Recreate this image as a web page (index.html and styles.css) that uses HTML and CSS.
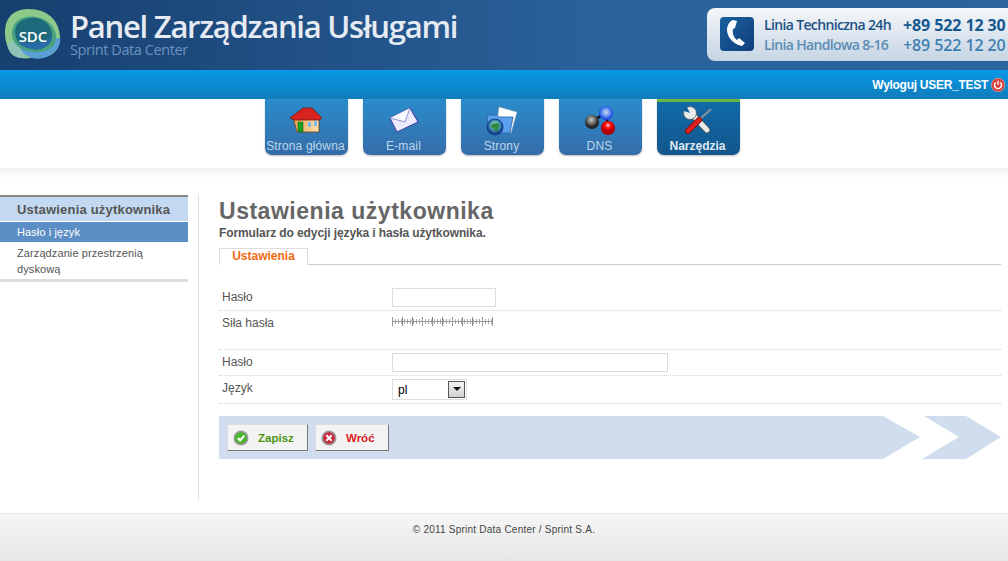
FILE: index.html
```html
<!DOCTYPE html>
<html lang="pl">
<head>
<meta charset="utf-8">
<title>Panel Zarządzania Usługami</title>
<link rel="stylesheet" href="styles.css">
</head>
<body>
<header class="top">
  <div class="brand">
    <svg class="logo" width="62" height="62" viewBox="0 0 62 62">
      <path d="M6 22C10 8 24 5 38 8c14 3 21 14 22 26 1 13-8 23-20 20C26 58 12 58 8 46 5 38 4 30 6 22z" fill="#8cc98a"/>
      <path d="M8 42c4-6 12-4 18 2 4 5 2 12-4 12C14 56 8 50 8 42z" fill="#8fc3b8"/>
      <path d="M32 56c-8-2-14-10-12-16l40-4c2 12-14 24-28 20z" fill="#5a9fd6"/>
      <path d="M12 30C13 18 24 13 36 15c12 2 20 10 20 20 0 11-10 16-22 15-13-1-23-8-22-20z" fill="#46a27f"/>
      <path d="M15 30c0-10 10-15 21-14 10 1 17 10 16 19-1 9-11 14-20 12-10-1-17-8-17-17z" fill="#1d6a7c"/>
      <path d="M18 40c8 2 22 2 34-5-1 9-11 14-20 12-6-1-11-3-14-7z" fill="#2a6aa8"/>
      <text x="33" y="40" class="logo-text" text-anchor="middle">SDC</text>
    </svg>
    <div class="brand-text">
      <div class="brand-title">Panel Zarządzania Usługami</div>
      <div class="brand-sub">Sprint Data Center</div>
    </div>
  </div>
  <div class="phone-box">
    <span class="phone-icon">
      <svg width="33" height="33" viewBox="0 0 33 33">
        <path d="M13 3l4 1-2 7-2 1c-1 4 1 9 4 11l2-2 6 5-3 3C14 28 7 20 7 13 7 8 10 4 13 3z" fill="#fff"/>
      </svg>
    </span>
    <div class="phone-grid">
      <span class="line-a">Linia Techniczna 24h</span><span class="num-a">+89 522 12 30</span>
      <span class="line-b">Linia Handlowa 8-16</span><span class="num-b">+89 522 12 20</span>
    </div>
  </div>
</header>

<div class="userbar">
  <span class="logout">Wyloguj USER_TEST</span>
  <svg class="power" width="14" height="14" viewBox="0 0 14 14">
    <circle cx="7" cy="7" r="6.700" fill="#d8413c" stroke="#f0b0a8" stroke-width=".6"/>
    <path d="M4.600 4.600a3.500 3.500 0 1 0 4.800 0" fill="none" stroke="#fff" stroke-width="1.400"/>
    <path d="M7 2.800v4" stroke="#fff" stroke-width="1.400"/>
  </svg>
</div>

<nav class="nav">
  <a class="tab">
    <svg class="tab-icon" width="35" height="30" viewBox="0 0 35 30">
      <defs><linearGradient id="wall" x1="0" x2="1"><stop offset="0" stop-color="#e8a050"/><stop offset="1" stop-color="#fde3ae"/></linearGradient></defs>
      <path d="M4 12h26v14H8z" fill="url(#wall)" stroke="#6a3a18" stroke-width=".8"/>
      <path d="M1 12 14 2h9l10 10-3 2H5z" fill="#d8231f" stroke="#6a1a10" stroke-width=".8"/>
      <path d="M9 16h5v10H9z" fill="#19a01c" stroke="#145a14" stroke-width=".5"/>
      <path d="M19 16h3v5h-3zM25 15h3v5h-3z" fill="#7ab8ee"/>
    </svg>
    <span>Strona główna</span>
  </a>
  <a class="tab">
    <svg class="tab-icon" width="35" height="30" viewBox="0 0 35 30">
      <path d="M3 12 23 2l8 14-21 10z" fill="#ecebfd" stroke="#3c3a9c"/>
      <path d="M3 12 18 16 23 2" fill="#f8f8ff" stroke="#7a78c8" stroke-width=".8"/>
    </svg>
    <span>E-mail</span>
  </a>
  <a class="tab">
    <svg class="tab-icon" width="35" height="30" viewBox="0 0 35 30">
      <defs>
        <radialGradient id="globe" cx=".5" cy=".4"><stop offset="0" stop-color="#d8f0f6"/><stop offset=".55" stop-color="#4aa0b0"/><stop offset="1" stop-color="#14408c"/></radialGradient>
      </defs>
      <path d="M14 1l18 5-6 21-15-4z" fill="#fff" stroke="#9ab" stroke-width=".6"/>
      <path d="M2 9h10l2 2h14l-3 16H4z" fill="#5aa0ec" stroke="#2a62b0" stroke-width=".8"/>
      <circle cx="10" cy="21" r="8" fill="url(#globe)" stroke="#123f90"/>
      <path d="M7 18l5-1 3 2-2 3-1 4-3-3-3-2z" fill="#2e8a3c"/>
    </svg>
    <span>Strony</span>
  </a>
  <a class="tab">
    <svg class="tab-icon" width="35" height="30" viewBox="0 0 35 30">
      <defs>
        <radialGradient id="gk" cx=".45" cy=".35"><stop offset="0" stop-color="#ccc"/><stop offset="1" stop-color="#222"/></radialGradient>
        <radialGradient id="gb" cx=".5" cy=".45"><stop offset="0" stop-color="#cde"/><stop offset=".7" stop-color="#4a7cf0"/><stop offset="1" stop-color="#1a3fe0"/></radialGradient>
        <radialGradient id="gr" cx=".5" cy=".3"><stop offset="0" stop-color="#fcc"/><stop offset=".45" stop-color="#f00"/><stop offset="1" stop-color="#a00"/></radialGradient>
      </defs>
      <path d="M9 16 23 6l2 16" fill="none" stroke="#111" stroke-width="2.500"/>
      <circle cx="23" cy="7" r="7" fill="url(#gb)"/>
      <circle cx="9" cy="16" r="7" fill="url(#gk)"/>
      <circle cx="25" cy="22" r="7" fill="url(#gr)"/>
    </svg>
    <span>DNS</span>
  </a>
  <a class="tab tab-on">
    <svg class="tab-icon" width="35" height="30" viewBox="0 0 35 30">
      <path d="M11 8 26 24" stroke="#555" stroke-width="6.500" stroke-linecap="round"/>
      <path d="M11 8 26 24" stroke="#e8eaec" stroke-width="5" stroke-linecap="round"/>
      <circle cx="9" cy="7" r="6.500" fill="#e8eaec" stroke="#555" stroke-width=".8"/>
      <path d="M9 7 5 -1 0 4z" fill="#0f66a2"/>
      <path d="M30 3 18 14" stroke="#8a9096" stroke-width="2"/>
      <path d="M18 14 7 25" stroke="#7a0f0f" stroke-width="6" stroke-linecap="round"/>
      <path d="M18 14 7 25" stroke="#dc2020" stroke-width="4.500" stroke-linecap="round"/>
    </svg>
    <span>Narzędzia</span>
  </a>
</nav>

<main class="main">
  <aside class="side">
    <h3 class="side-title">Ustawienia użytkownika</h3>
    <a class="side-link side-on">Hasło i język</a>
    <a class="side-link">Zarządzanie przestrzenią dyskową</a>
  </aside>
  <section class="content">
    <h1 class="page-title">Ustawienia użytkownika</h1>
    <p class="page-sub">Formularz do edycji języka i hasła użytkownika.</p>
    <div class="tabs"><span class="tab-label">Ustawienia</span></div>
    <form class="form">
      <div class="row row-a"><label>Hasło</label><span class="input input-s"></span></div>
      <div class="row row-b">
        <label>Siła hasła</label>
        <span class="meter"></span>
      </div>
      <div class="row row-a"><label>Hasło</label><span class="input input-l"></span></div>
      <div class="row row-c">
        <label class="lang">Język</label>
        <span class="select">pl<span class="select-btn"><i></i></span></span>
      </div>
    </form>
    <div class="actions">
      <div class="band">
        <a class="btn btn-ok">
          <svg width="16" height="16" viewBox="0 0 16 16"><circle cx="8" cy="8" r="7.500" fill="#999"/><circle cx="8" cy="8" r="5.800" fill="#46b52a"/><path d="M4.800 8l2.300 2.500 4.200-5" fill="none" stroke="#fff" stroke-width="2"/></svg>
          Zapisz
        </a>
        <a class="btn btn-back">
          <svg width="16" height="16" viewBox="0 0 16 16"><circle cx="8" cy="8" r="7.500" fill="#999"/><circle cx="8" cy="8" r="5.800" fill="#c9263a"/><path d="M5.300 5.300l5.400 5.400M10.700 5.300l-5.400 5.400" stroke="#fff" stroke-width="2"/></svg>
          Wróć
        </a>
      </div>
      <div class="chevron"></div>
    </div>
  </section>
</main>

<footer class="foot">© 2011 Sprint Data Center / Sprint S.A.</footer>
</body>
</html>
```
FILE: styles.css
```css
* { box-sizing: border-box; }
html, body { margin: 0; padding: 0; }
body { width: 1008px; height: 561px; overflow: hidden; background: #fff; font-family: "Liberation Sans", Arial, sans-serif; font-size: 11px; color: #555; display: flex; flex-direction: column; }

.top { height: 70px; flex: none; display: flex; justify-content: space-between; padding: 8px 0 0 5px; background: linear-gradient(90deg, #173f6f 0%, #2a629b 60%, #2b649c 100%); overflow: hidden; }
.brand { display: flex; gap: 8px; height: 56px; }
.logo { flex: none; margin: -6px 0 0 -5px; }
.logo-text { font-family: "Open Sans", sans-serif; font-size: 15px; font-weight: 600; fill: #fff; }
.brand-text { display: flex; flex-direction: column; }
.brand-title { font-family: "Open Sans", sans-serif; font-size: 31px; font-weight: 600; line-height: 33px; margin-top: 2px; color: #e6ebf3; letter-spacing: -1.25px; white-space: nowrap; }
.brand-sub { font-family: "Open Sans", sans-serif; font-size: 14.500px; line-height: 14px; color: #6d93c0; letter-spacing: -.42px; }

.phone-box { width: 301px; height: 53px; flex: none; display: flex; gap: 10px; padding: 9px 0 0 13px; border-radius: 8px 0 0 8px; background: linear-gradient(180deg, #f4f6f9 0%, #c6d5e4 100%); }
.phone-icon { width: 34px; height: 34px; flex: none; border-radius: 4px; background: linear-gradient(135deg, #1b5f9e, #0f3f7c); }
.phone-grid { display: grid; grid-template-columns: 139px auto; grid-auto-rows: 20px; margin-top: -2px; font-family: "Open Sans", sans-serif; font-size: 14px; line-height: 20px; white-space: nowrap; letter-spacing: -.65px; font-weight: 600; }
.line-a { color: #1c5285; }
.line-b { color: #5a8cb4; }
.num-a { color: #15588f; font-size: 16px; letter-spacing: -.1px; font-weight: 700; }
.num-b { color: #3f7fb2; font-size: 16px; letter-spacing: -.1px; font-weight: 600; }

.userbar { height: 29px; flex: none; display: flex; align-items: center; justify-content: flex-end; gap: 3px; padding: 1px 3px 0 0; background: linear-gradient(180deg, #0a98e8 0%, #0f7cba 100%); }
.logout { color: #fff; font-size: 12px; font-weight: 700; letter-spacing: -.28px; }
.power { flex: none; }

.nav { height: 70px; flex: none; display: flex; justify-content: center; gap: 15px; padding-right: 3px; border-bottom: 1px solid #eee; }
.tab { width: 83px; height: 56px; display: flex; flex-direction: column; align-items: center; padding-top: 7px; border-radius: 0 0 7px 7px; background: linear-gradient(180deg, #2a8ccb 0%, #356da9 100%); box-shadow: 0 1px 2px #bbb; color: #bcd6ea; font-size: 12px; letter-spacing: .15px; }
.tab-icon { flex: none; }
.tab span { margin: 3px 2px 0 0; white-space: nowrap; line-height: 14px; }
.tab-on { border-top: 3px solid #6ab93f; padding-top: 4px; background: linear-gradient(180deg, #0f6aa6 0%, #14568d 100%); color: #dfe9f1; font-weight: 700; letter-spacing: 0; }

.main { flex: 1; display: flex; align-items: stretch; padding-top: 26px; padding-bottom: 13px; background: linear-gradient(180deg, #f3f3f3 0, #fff 10px) no-repeat; }
.side { width: 188px; flex: none; align-self: flex-start; border-top: 2px solid #888; border-bottom: 3px solid #ddd; }
.side-title { margin: 0; height: 25px; padding-left: 17px; background: #c3d9f1; font-size: 13px; line-height: 25px; font-weight: 700; color: #555; letter-spacing: .2px; border-bottom: 1px solid #fff; }
.side-link { display: block; padding: 3px 17px 2px; line-height: 16px; color: #555; letter-spacing: .1px; }
.side-on { height: 20px; padding-top: 2px; background: #5b8ec4; color: #fff; }

.content { width: 803px; margin-left: 10px; padding: 0 0 0 20px; border-left: 1px solid #ddd; flex: none; }
.page-title { margin: 3px 0 0; font-size: 23px; line-height: 27px; font-weight: 700; color: #666; letter-spacing: .52px; }
.page-sub { margin: 1px 0 0; font-size: 12px; line-height: 14px; font-weight: 700; color: #555; letter-spacing: -.1px; }
.tabs { margin-top: 8px; height: 17px; border-bottom: 1px solid #ccc; }
.tab-label { display: block; width: 89px; height: 17px; border: 1px solid #ddd; border-bottom: 0; background: #fff; text-align: center; color: #f26a12; font-size: 12px; line-height: 15px; font-weight: 700; }

.form { margin-top: 20px; }
.row { display: flex; border-bottom: 1px dotted #d4d4d4; font-size: 12px; color: #555; }
.row label { width: 173px; padding-left: 3px; flex: none; }
.row-a { height: 26px; align-items: center; padding-bottom: 1px; }
.row-b { height: 39px; padding-top: 5px; }
.row-c { height: 28px; align-items: center; }
.lang { margin-top: -3px; }
.input { display: block; height: 19px; background: #fff; border: 1px solid #ddd; }
.input-s { width: 104px; }
.input-l { width: 276px; }
.meter { display: block; width: 101px; height: 9px; margin-top: 1px; border-left: 1px solid #999; border-right: 1px solid #999; background:
  linear-gradient(#999, #999) 0 50% / 100% 1px no-repeat,
  repeating-linear-gradient(90deg, transparent 0 2px, #aaa 2px 3px) 0 2px / 100% 5px no-repeat,
  repeating-linear-gradient(90deg, transparent 0 9px, #888 9px 10px) 0 0 / 100% 9px no-repeat; }
.select { display: flex; align-items: center; justify-content: space-between; width: 75px; height: 21px; margin-top: -1px; padding: 2px 1px 0 5px; background: #fff; border: 1px solid #ddd; color: #000; font-size: 12px; }
.select-btn { width: 17px; height: 17px; margin-top: -2px; border: 1px solid #555; background: linear-gradient(#f4f4f4, #d0d0d0); display: flex; align-items: center; justify-content: center; }
.select-btn i { width: 0; height: 0; border-left: 4px solid transparent; border-right: 4px solid transparent; border-top: 4px solid #111; }

.actions { display: flex; margin-top: 12px; height: 43px; }
.band { width: 701px; height: 43px; flex: none; display: flex; gap: 7px; padding: 8px 0 0 8px; background: #cfddee; clip-path: polygon(0 0, 664px 0, 701px 21px, 664px 43px, 0 43px); }
.chevron { width: 79px; height: 43px; margin-left: 2px; flex: none; background: #cfddee; clip-path: polygon(2px 0, 44px 0, 79px 21px, 44px 43px, 0 43px, 37px 21px); }
.btn { display: flex; align-items: center; gap: 9px; height: 27px; padding-left: 5px; background: #f3f3f3; border: 1px solid #ddd; border-right-color: #777; border-bottom-color: #777; font-size: 11.500px; font-weight: 700; }
.btn-ok { width: 81px; color: #4c9412; gap: 9px; }
.btn-back { width: 74px; color: #d8201e; }

.foot { height: 48px; flex: none; padding-top: 10px; text-align: center; font-size: 10px; line-height: 12px; color: #444; letter-spacing: .23px; border-top: 1px solid #e8e8e8; background: linear-gradient(180deg, #f6f6f6 0%, #e6e6e6 100%); }
```
